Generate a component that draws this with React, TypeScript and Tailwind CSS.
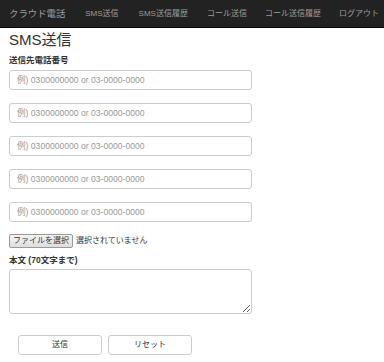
import React from "react";

const font = { fontFamily: '"Liberation Sans", "Noto Sans CJK JP", sans-serif' };

export default function App() {
  const inputs = [0, 1, 2, 3, 4];
  return (
    <div className="w-[384px] h-[362px] bg-white text-[#333] overflow-hidden" style={font}>
      <nav className="h-[28px] bg-[#222] border-b border-[#080808] flex items-center whitespace-nowrap">
        <span className="shrink-0 pl-[9px] pr-[10px] text-[9.4px] text-[#9d9d9d] leading-none">クラウド電話</span>
        <ul className="flex shrink-0 items-center text-[8px] text-[#9d9d9d] leading-none">
          <li className="shrink-0 px-[10px]">SMS送信</li>
          <li className="shrink-0 px-[10px]">SMS送信履歴</li>
          <li className="shrink-0 px-[9px]">コール送信</li>
          <li className="shrink-0 px-[9px]">コール送信履歴</li>
          <li className="shrink-0 px-[9px]">ログアウト</li>
        </ul>
      </nav>
      <main className="px-[9px]">
        <h2 className="mt-[3px] text-[15px] leading-[18px] font-normal">SMS送信</h2>
        <div className="mt-[5px] text-[8.5px] leading-[12px] font-bold">送信先電話番号</div>
        <div className="mt-[4px] flex flex-col gap-[13px] w-[243px]">
          {inputs.map((i) => (
            <input
              key={i}
              className="h-[20px] w-full border border-[#ccc] rounded-[3px] px-[7px] text-[8.6px] placeholder:text-[#999] outline-none"
              placeholder="例) 0300000000 or 03-0000-0000"
              style={font}
            />
          ))}
        </div>
        <div className="mt-[12px] flex items-center text-[8px] leading-none">
          <span className="h-[14px] px-[3px] flex items-center border border-[#999] rounded-[2px] bg-gradient-to-b from-[#f4f4f4] to-[#dedede]">ファイルを選択</span>
          <span className="ml-[3px]">選択されていません</span>
        </div>
        <div className="mt-[6px] text-[8.5px] leading-[12px] font-bold">本文 (70文字まで)</div>
        <textarea
          className="mt-[3px] block w-[243px] h-[45px] border border-[#ccc] rounded-[3px] outline-none"
        />
        <div className="mt-[21px] ml-[9px] flex gap-[6px]">
          <button className="w-[84px] h-[20px] border border-[#ccc] rounded-[3px] bg-white text-[8px] text-[#333]" style={font}>送信</button>
          <button className="w-[84px] h-[20px] border border-[#ccc] rounded-[3px] bg-white text-[8px] text-[#333]" style={font}>リセット</button>
        </div>
      </main>
    </div>
  );
}
